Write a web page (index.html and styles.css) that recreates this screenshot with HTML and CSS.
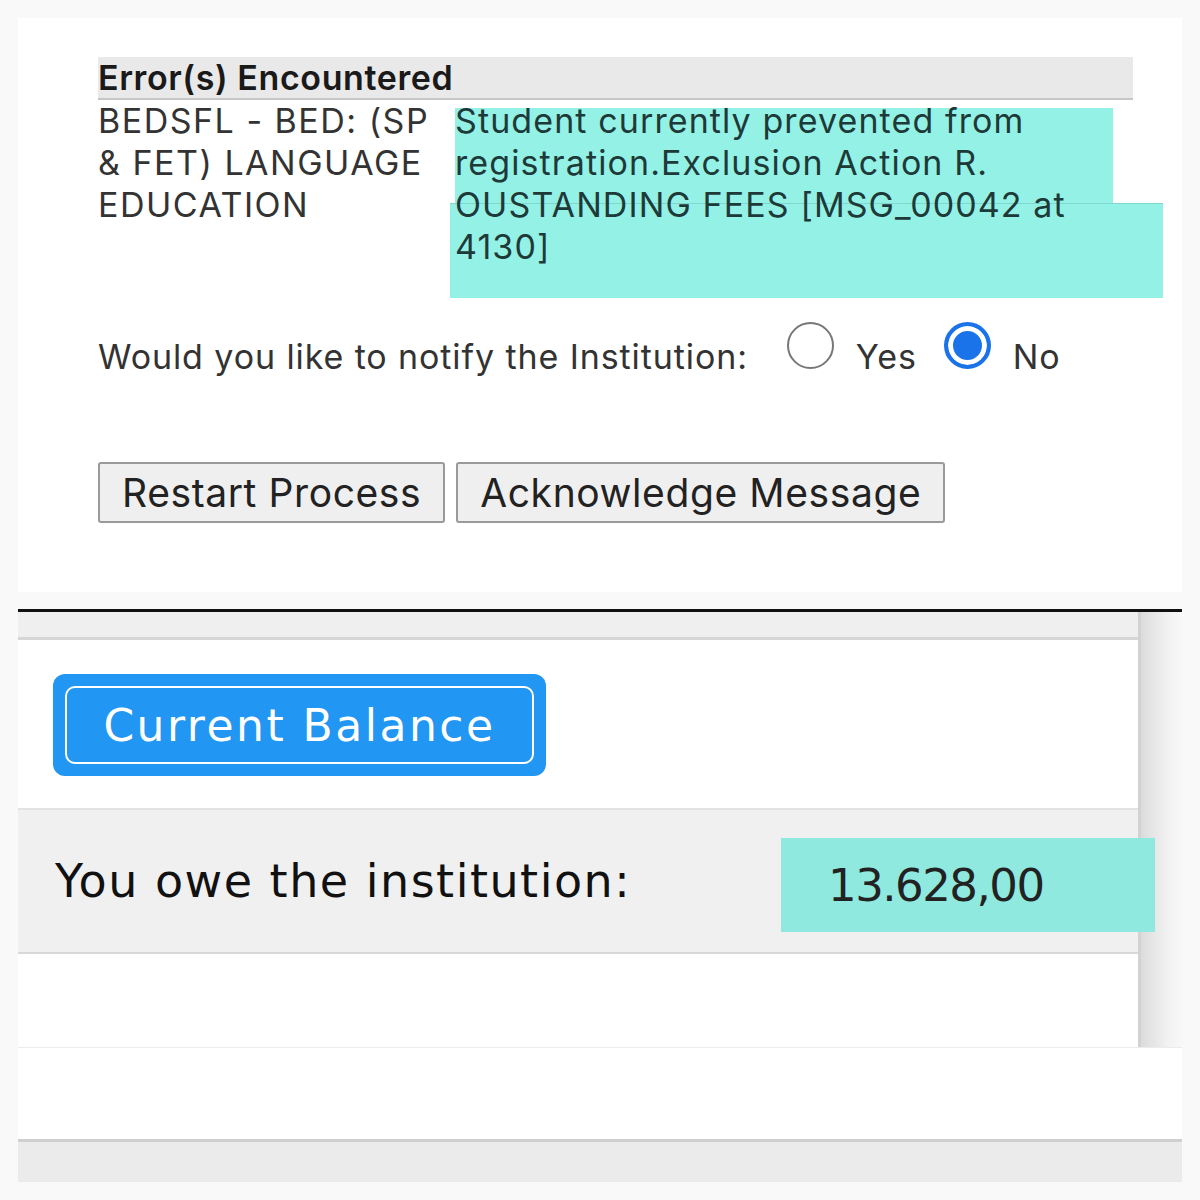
FILE: index.html
```html
<!DOCTYPE html>
<html lang="en">
<head>
  <meta charset="UTF-8">
  <title>Registration Error</title>
  <link rel="stylesheet" href="styles.css">
</head>
<body>

  <div class="collage">

    <section class="shot shot-top">
      <table class="errors">
        <thead>
          <tr><th colspan="2">Error(s) Encountered</th></tr>
        </thead>
        <tbody>
          <tr>
            <td class="course">BEDSFL - BED: (SP<br>&amp; FET) LANGUAGE<br>EDUCATION</td>
            <td class="reason">
              <span class="mark mark-a"></span>
              <span class="mark mark-b"></span>
              <span class="reason-text">Student currently prevented from<br>registration.Exclusion Action R.<br>OUSTANDING FEES [MSG_00042 at<br>4130]</span>
            </td>
          </tr>
        </tbody>
      </table>

      <div class="notify">
        <span class="notify-label">Would you like to notify the Institution:</span>
        <label class="choice"><span class="radio"></span>Yes</label>
        <label class="choice"><span class="radio checked"></span>No</label>
      </div>

      <div class="actions">
        <button class="btn">Restart Process</button>
        <button class="btn">Acknowledge Message</button>
      </div>
    </section>

    <div class="divider"></div>

    <section class="shot shot-bottom">
      <div class="panel">
        <div class="panel-main">
          <div class="band"></div>
          <div class="balance-head">
            <button class="balance-btn"><span>Current Balance</span></button>
          </div>
          <div class="owe-row">
            <span class="owe-label">You owe the institution:</span>
            <span class="owe-value">13.628,00</span>
          </div>
          <div class="blank"></div>
        </div>
        <div class="panel-shadow"></div>
      </div>
      <div class="footer-blank"></div>
      <div class="footer-band"></div>
    </section>

  </div>

</body>
</html>
```

FILE: styles.css
```css
body {
  margin: 0;
  background-color: #f9f9f9;
}

.collage {
  width: 1164px;
  padding: 18px;
}

/* top screenshot */
.shot-top {
  background-color: #fff;
  height: 535px;
  padding: 39px 0 0 80px;
  font-family: 'Inter', 'Liberation Sans', sans-serif;
  color: #333;
}

.errors {
  width: 1035px;
  border-collapse: collapse;
  font-size: 34px;
  letter-spacing: 1.1px;
}

.errors th {
  height: 41px;
  padding: 0;
  text-align: left;
  font-weight: 600;
  color: #1a1a1a;
  background-color: #e9e9e9;
  border-bottom: 2px solid #c6c6c6;
  letter-spacing: 0.6px;
}

.errors td {
  padding: 0;
  line-height: 42px;
  vertical-align: top;
}

.course {
  width: 357px;
  letter-spacing: 1.5px;
}

.reason {
  position: relative;
  color: #1e3a38;
}

.reason-text {
  position: relative;
}

.mark {
  position: absolute;
  background-color: #94f1e6;
}

.mark-a {
  left: 0;
  top: 8px;
  width: 658px;
  height: 97px;
}

.mark-b {
  left: -5px;
  top: 103px;
  width: 713px;
  height: 94px;
  border-top: 1px solid #7fd8cd;
}

.notify {
  display: flex;
  align-items: center;
  margin-top: 63px;
  height: 50px;
  font-size: 34px;
  letter-spacing: 0.9px;
}

.notify-label {
  margin-right: 39px;
}

.choice {
  display: flex;
  align-items: center;
  margin-right: 27px;
}

.radio {
  width: 47px;
  height: 47px;
  border: 2px solid #777;
  border-radius: 50%;
  margin-right: 22px;
  margin-top: -22px;
  box-sizing: border-box;
  background-color: #fff;
}

.radio.checked {
  border: 4px solid #1a73e8;
  background-color: #1a73e8;
  box-shadow: inset 0 0 0 5px #fff;
}

.actions {
  display: flex;
  gap: 11px;
  margin-top: 81px;
}

.btn {
  height: 61px;
  padding: 0 22px;
  font-family: 'Inter', 'Liberation Sans', sans-serif;
  font-size: 39px;
  letter-spacing: 0.6px;
  color: #222;
  background-color: #efefef;
  border: 2px solid #9a9a9a;
  border-radius: 3px;
}

.divider {
  height: 3px;
  margin-top: 17px;
  background-color: #111;
}

/* bottom screenshot */
.shot-bottom {
  font-family: 'DejaVu Sans', sans-serif;
}

.panel {
  display: flex;
}

.panel-main {
  width: 1120px;
  background-color: #fff;
}

.panel-shadow {
  flex: 1;
  border-left: 3px solid #d2d2d2;
  background: linear-gradient(to right, #dcdcdc, #f3f3f3 70%, #f8f8f8);
}

.band {
  height: 25px;
  background-color: #efefef;
  border-bottom: 3px solid #d6d6d6;
}

.balance-head {
  height: 168px;
  padding: 34px 0 0 35px;
  box-sizing: border-box;
}

.balance-btn {
  width: 493px;
  height: 102px;
  padding: 12px;
  background-color: #2196f3;
  border: none;
  border-radius: 12px;
}

.balance-btn span {
  display: flex;
  align-items: center;
  justify-content: center;
  height: 100%;
  border: 2px solid #fff;
  border-radius: 10px;
  box-sizing: border-box;
  font-family: 'DejaVu Sans', sans-serif;
  font-size: 44px;
  letter-spacing: 2.5px;
  color: #fff;
}

.owe-row {
  display: flex;
  align-items: center;
  height: 142px;
  padding-left: 37px;
  background-color: #f0f0f0;
  border-top: 2px solid #e2e2e2;
  border-bottom: 2px solid #d8d8d8;
}

.owe-label {
  font-size: 46px;
  letter-spacing: 1.5px;
  color: #111;
}

.owe-value {
  position: relative;
  z-index: 1;
  display: flex;
  align-items: center;
  width: 327px;
  height: 94px;
  padding-left: 47px;
  margin: 8px -17px 0 auto;
  background-color: #8fe9de;
  font-size: 45px;
  letter-spacing: -1.5px;
  color: #222;
}

.blank {
  height: 93px;
}

.footer-blank {
  height: 91px;
  background-color: #fff;
  border-top: 1px solid #ececec;
  border-bottom: 3px solid #cfcfcf;
}

.footer-band {
  height: 40px;
  background-color: #ebebeb;
}
```
